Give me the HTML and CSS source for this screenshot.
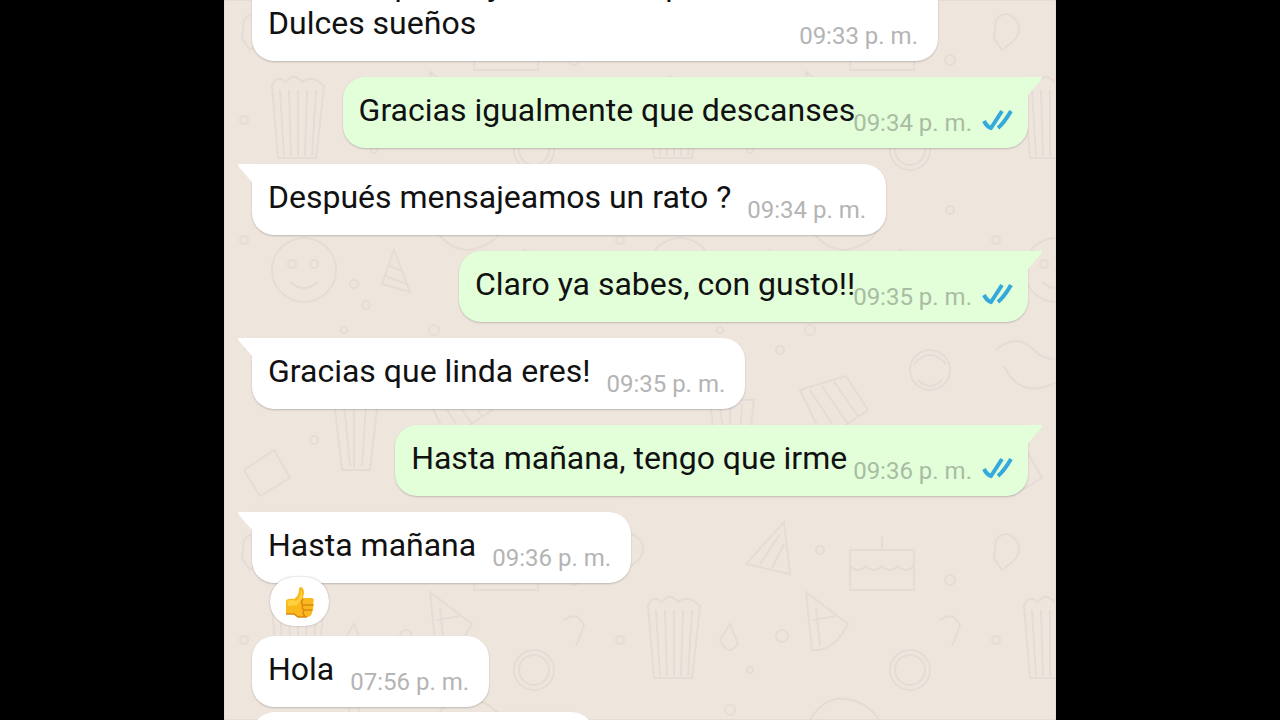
FILE: index.html
```html
<!DOCTYPE html>
<html lang="es">
<head>
  <meta charset="UTF-8">
  <meta name="viewport" content="width=device-width, initial-scale=1.0">
  <title>Chat</title>
  <link rel="stylesheet" href="styles.css">
</head>
<body>
  <svg class="defs" aria-hidden="true">
    <symbol id="ticks" viewBox="0 0 32 22">
      <path d="M2 12 Q5 18 9 19 Q13 13 20 2 M16 19 Q22 14 29 2" />
    </symbol>
  </svg>
  <main class="chat">
    <svg class="doodles" aria-hidden="true">
      <defs>
        <pattern id="doodle" width="376" height="520" patternUnits="userSpaceOnUse">
          <!-- popcorn -->
          <path d="M48 86 L54 158 H92 L100 86 M56 90 L60 156 M65 90 L67 156 M74 90 V156 M83 90 L81 156 M92 90 L88 156 M48 86 Q52 74 62 82 Q70 72 78 82 Q88 74 100 86" />
          <!-- face -->
          <circle cx="80" cy="270" r="32" />
          <circle cx="68" cy="264" r="4" /><circle cx="90" cy="264" r="4" />
          <path d="M66 282 Q80 294 94 282" />
          <!-- party hat -->
          <path d="M170 250 L186 292 L158 284 Z M166 266 l14 6 M162 276 l20 8" />
          <!-- cake -->
          <path d="M250 30 h64 v40 h-64 z M250 46 q8 8 16 0 q8 8 16 0 q8 8 16 0 q8 8 16 0 M282 30 V16" />
          <!-- gift box -->
          <path d="M200 390 L246 376 L268 410 L224 440 Z M210 390 L236 430 M222 386 L248 424 M234 382 L258 416" />
          <circle cx="310" cy="150" r="20" /><circle cx="310" cy="150" r="15" />
          <path d="M184 2 L146 44 L190 54 Z M180 14 L160 44 M184 24 L172 48" />
          <path d="M206 72 L212 130 Q234 132 248 104 Z M216 88 L220 126 M212 100 l24 -4" />
          <path d="M210 200 q20 -34 56 -14 q30 22 6 52 q-30 24 -54 0 q-18 -18 -8 -38 M226 210 q18 -18 38 0" />
          <path d="M20 350 q20 -18 38 0 t38 0 M28 366 q14 30 44 20 q30 -12 20 -34" />
          <path d="M110 400 L118 470 H146 L154 400 Z M120 404 L126 466 M130 404 V468 M142 404 L138 466" />
          <path d="M300 250 l34 16 l-10 40 l-36 -14 z M306 262 l22 10" />
          <circle cx="330" cy="370" r="20" /><path d="M314 364 q16 -18 32 0 M318 380 q12 12 24 0" />
          <path d="M20 20 q10 -12 20 0 q8 12 -4 22 l-10 8 l-8 -12 z" />
          <path d="M240 480 q24 -30 50 0 q-24 28 -50 0 M20 470 l30 -20 l16 28 l-30 18 z" />
          <path d="M120 120 l10 -16 l8 20 q-10 14 -18 -4 M340 100 q14 -10 20 6 l-8 20" />
          <circle cx="20" cy="120" r="4" /><circle cx="130" cy="190" r="5" /><circle cx="150" cy="150" r="3" />
          <circle cx="350" cy="60" r="5" /><circle cx="350" cy="210" r="4" /><circle cx="180" cy="350" r="4" />
          <circle cx="20" cy="240" r="4" /><circle cx="90" cy="440" r="4" /><circle cx="220" cy="30" r="4" />
          <circle cx="210" cy="330" r="5" /><circle cx="350" cy="440" r="4" /><circle cx="120" cy="330" r="3" />
          <circle cx="182" cy="116" r="6" /><circle cx="130" cy="284" r="4" /><circle cx="142" cy="305" r="4" />
        </pattern>
      </defs>
      <rect width="100%" height="100%" fill="url(#doodle)" />
    </svg>

    <div class="messages">
      <div class="message in long">
        <p>Gracias que mejores tardes para ti<br>Dulces sueños</p>
        <time>09:33 p. m.</time>
      </div>
      <div class="message out tail">
        <p>Gracias igualmente que descanses</p>
        <time>09:34 p. m.</time>
        <svg class="ticks" role="img" aria-label="Leído"><use href="#ticks" /></svg>
      </div>
      <div class="message in tail">
        <p>Después mensajeamos un rato ?</p>
        <time>09:34 p. m.</time>
      </div>
      <div class="message out tail">
        <p>Claro ya sabes, con gusto!!</p>
        <time>09:35 p. m.</time>
        <svg class="ticks" role="img" aria-label="Leído"><use href="#ticks" /></svg>
      </div>
      <div class="message in tail">
        <p>Gracias que linda eres!</p>
        <time>09:35 p. m.</time>
      </div>
      <div class="message out tail">
        <p>Hasta mañana, tengo que irme&nbsp;</p>
        <time>09:36 p. m.</time>
        <svg class="ticks" role="img" aria-label="Leído"><use href="#ticks" /></svg>
      </div>
      <div class="message in tail reacted">
        <p>Hasta mañana</p>
        <time>09:36 p. m.</time>
        <button class="reaction" type="button" aria-label="Me gusta">
          <svg viewBox="0 0 30 32" aria-hidden="true">
            <path fill="#f9b91c" d="M1 14 Q5 12 9 13 Q14 10 14 3 Q14 1 16 1 Q19 2 19 7 L18 12 H27 Q30 13 28 17 Q30 19 28 21 Q29 24 27 26 Q27 30 23 31 H13 L9 28 H1 Z" />
            <path fill="#ffd03e" d="M2 15 Q8 13 11 15 Q16 11 16 4 Q18 7 17 13 L12 19 L3 20 Z" />
            <path fill="none" stroke="#d98612" stroke-width="1.5" d="M18 13 Q15 17 18 19 H28 M18 19 Q16 22 19 24 H27 M19 24 Q17 28 20 30 M1 28 H9 L13 31 H22" />
          </svg>
        </button>
      </div>
      <div class="message in">
        <p>Hola</p>
        <time>07:56 p. m.</time>
      </div>
      <div class="message in next">
        <p>Cómo estas</p>
        <time>07:56 p. m.</time>
      </div>
    </div>
  </main>
</body>
</html>
```

FILE: styles.css
```css
* { margin:0; padding:0; box-sizing:border-box; }
body {
  font-family: Roboto, "Noto Sans", sans-serif;
  background:#000;
  height:100vh;
  overflow:hidden;
}
.defs { position:absolute; width:0; height:0; }
.chat {
  position:relative;
  width:65%;
  height:100%;
  margin:0 auto;
  background:#eee5dd;
  overflow:hidden;
}
.doodles {
  position:absolute; inset:0;
  width:100%; height:100%;
  fill:none; stroke:#e5dcd5; stroke-width:2;
}
.messages {
  position:relative;
  display:flex; flex-direction:column;
  gap:16px;
  margin-top:-48px;
  padding:0 28px;
}
.message {
  position:relative;
  display:flex; align-items:flex-end;
  padding:14px 20px 19px 16px;
  border-radius:22px;
  box-shadow:0 1px 2px rgba(0,0,0,0.2);
}
.message p { font-size:32px; line-height:38px; color:#111; white-space:nowrap; }
.message time {
  font-size:24px; line-height:28px;
  color:#b4b4b4;
  margin:0 0 -8px 16px;
  white-space:nowrap;
}
.in { align-self:flex-start; background:#fff; }
.out { align-self:flex-end; background:#e2ffd9; padding-right:14px; }
.out time { margin-left:-2px; color:#a9bca3; }
.long { width:686px; justify-content:space-between; }
.ticks {
  width:32px; height:22px;
  margin:0 0 -2px 10px;
  fill:none; stroke:#35a9dc; stroke-width:4;
}
/* bubble tails */
.tail::before {
  content:''; position:absolute; top:0;
  width:34px; height:20px;
  background:inherit;
}
.in.tail { border-top-left-radius:0; }
.in.tail::before { left:-14px; clip-path:polygon(0 0, 100% 0, 100% 100%, 14px 100%, 14px 18px, 1px 3px); }
.out.tail { border-top-right-radius:0; }
.out.tail::before { right:-14px; clip-path:polygon(0 0, 100% 0, 33px 3px, 20px 18px, 20px 100%, 0 100%); }
.reacted { margin-bottom:37px; }
.reaction {
  position:absolute; left:18px; bottom:-43px;
  display:flex; align-items:center; justify-content:center;
  width:59px; height:49px;
  border:none; border-radius:24px;
  background:#fff;
  box-shadow:0 0 2px rgba(0,0,0,0.3);
  cursor:pointer;
}
.reaction svg { width:30px; height:32px; }
.next { margin-top:-11px; }
```
